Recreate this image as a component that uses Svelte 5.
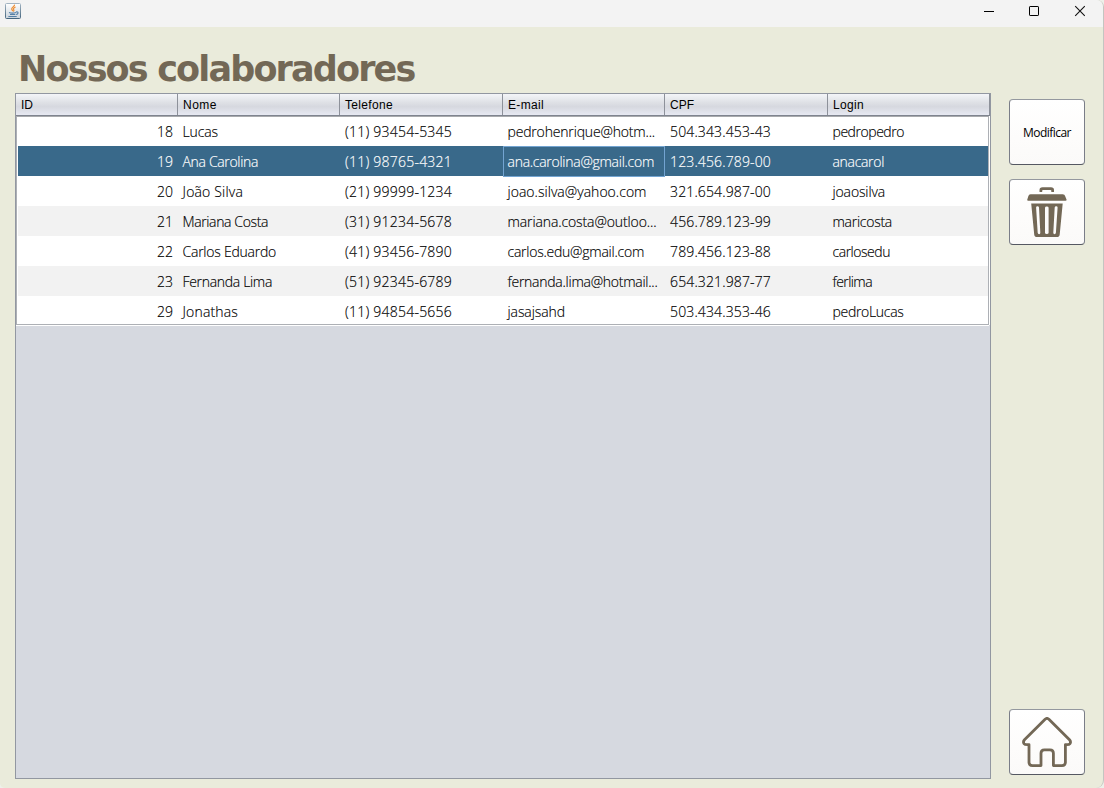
<script>
  const columns = [
    { name: 'ID', w: 12 },
    { name: 'Nome', w: 34 },
    { name: 'Telefone', w: 48 },
    { name: 'E-mail', w: 36 },
    { name: 'CPF', w: 24 },
    { name: 'Login', w: 31 }
  ];
  const rows = [
    ['18', 'Lucas', '(11) 93454-5345', 'pedrohenrique@hotm...', '504.343.453-43', 'pedropedro'],
    ['19', 'Ana Carolina', '(11) 98765-4321', 'ana.carolina@gmail.com', '123.456.789-00', 'anacarol'],
    ['20', 'João Silva', '(21) 99999-1234', 'joao.silva@yahoo.com', '321.654.987-00', 'joaosilva'],
    ['21', 'Mariana Costa', '(31) 91234-5678', 'mariana.costa@outloo...', '456.789.123-99', 'maricosta'],
    ['22', 'Carlos Eduardo', '(41) 93456-7890', 'carlos.edu@gmail.com', '789.456.123-88', 'carlosedu'],
    ['23', 'Fernanda Lima', '(51) 92345-6789', 'fernanda.lima@hotmail...', '654.321.987-77', 'ferlima'],
    ['29', 'Jonathas', '(11) 94854-5656', 'jasajsahd', '503.434.353-46', 'pedroLucas']
  ];
  const widths = [
    [16, 35.5, 107, 147.5, 101, 71.5],
    [16, 75.5, 107, 146.5, 101, 51.5],
    [16, 60.5, 107, 139, 101, 52.5],
    [16, 85.5, 107, 149, 101, 59.5],
    [16, 93.5, 107, 136.5, 101, 57.5],
    [16, 89.5, 107, 150, 101, 39.5],
    [16, 55.5, 107, 57.5, 101, 71]
  ];
  let selectedRow = $state(1);
  let selectedCol = $state(3);

  // Tracks the letters so that the label takes the given width.
  function fit(node, width) {
    const natural = node.getBoundingClientRect().width;
    node.style.letterSpacing = (width - natural) / node.textContent.length + 'px';
  }
</script>

<div class="window">
  <header class="titlebar">
    <svg class="java" width="16" height="16" viewBox="0 0 16 16">
      <defs>
        <linearGradient id="jb" x1="0" y1="0" x2="0" y2="1">
          <stop offset="0" stop-color="#fff" />
          <stop offset="1" stop-color="#c9d3dc" />
        </linearGradient>
        <linearGradient id="js" x1="0" y1="0" x2="0" y2="1">
          <stop offset="0" stop-color="#a3b4c2" />
          <stop offset="1" stop-color="#45667f" />
        </linearGradient>
      </defs>
      <rect x=".5" y=".5" width="15" height="15" rx="1" fill="url(#jb)" stroke="url(#js)" />
      <path d="M9.5 1.6C10 3.5 6.2 4.2 6.7 6.1c.2.9 1 1.3 1 2.2M10.6 4c-1.9.8-2.7 1.7-1.9 2.7.5.7.2 1.3-.5 1.8" fill="none" stroke="#ee8d32" stroke-width="1.2" />
      <path d="M4 9.4c1.8.8 5 .8 7 0M5 11.5h5.3M3.4 13.5h8.3M11 9c2.9-.6 2.5 2.1.1 2.5" fill="none" stroke="#557fa5" stroke-width="1.1" />
    </svg>
    <svg class="controls" width="103" height="12" viewBox="0 0 103 12">
      <path d="M0 6.5h10" stroke="#000" />
      <rect x="45.5" y="1.5" width="9" height="9" rx=".6" fill="none" stroke="#000" />
      <path d="M91.2 1.2l9.6 9.6M100.8 1.2l-9.6 9.6" stroke="#111" stroke-width="1.1" />
    </svg>
  </header>

  <div class="content">
    <main>
      <h1><span use:fit={396.5}>Nossos colaboradores</span></h1>
      <section class="scroll">
        <div class="grid head">
          {#each columns as col}
            <div class="th"><span use:fit={col.w}>{col.name}</span></div>
          {/each}
        </div>
        <div class="body">
          {#each rows as row, r}
            <div class="grid row" class:selected={r === selectedRow}>
              {#each row as value, c}
                <div class="td" class:focus={r === selectedRow && c === selectedCol}>
                  <span use:fit={widths[r][c]}>{value}</span>
                </div>
              {/each}
            </div>
          {/each}
        </div>
      </section>
    </main>

    <aside>
      <button><span use:fit={48}>Modificar</span></button>
      <button aria-label="Excluir">
        <svg width="40" height="50" viewBox="0 0 40 50" fill="#736856">
          <path d="M12.5 5V3Q12.5 .2 15.5 .2h8.5Q27 .2 27 3v2h-2.7V3.6q0-.7-.8-.7H16q-.8 0-.8.7V5z" />
          <path d="M3.5 7.2h32.2q2 0 2.5 2l1.3 3.3q.4 1.2-1 1.2H1.2q-1.3 0-.9-1.2L1.3 9.2q.5-2 2.2-2z" />
          <path fill-rule="evenodd" d="M4.2 16.4h31.5l-3 31q-.3 2.6-3 2.6H10.2q-2.7 0-3-2.6zM9.1 20.5l1.6 25.3q.2 1.4 1.4 1.4 1.3 0 1.2-1.4L12 20.5q-.2-1.2-1.5-1.2t-1.4 1.2zM18 20.7v25q0 1.4 1.8 1.4t1.8-1.4v-25q0-1.3-1.8-1.3T18 20.7zM27.7 20.5l-1.4 25.3q0 1.4 1.2 1.4t1.4-1.4l1.7-25.3q0-1.2-1.4-1.2t-1.5 1.2z" />
        </svg>
      </button>
      <button class="home" aria-label="Início">
        <svg width="50" height="50" viewBox="0 0 50 50" fill="none" stroke="#736856" stroke-width="2.8" stroke-linejoin="round">
          <path d="M23.1 2.2Q25 .6 26.9 2.2L47.5 22.8Q49.2 24.7 48 26.6Q47 28 43.4 27.6V45.2Q43.4 48.6 40 48.6H31.4V36.3Q31.4 32.8 28 32.8H22.4Q19 32.8 19 36.3V48.6H10.4Q7 48.6 7 45.2V27.6Q3 28 2 26.6Q.8 24.7 2.5 22.8Z" />
        </svg>
      </button>
    </aside>
  </div>
</div>

<style>
  :global(body) {
    margin: 0;
    background: #eef0ea;
    overflow: hidden;
  }
  .window {
    box-sizing: border-box;
    width: 1104px;
    height: 788px;
    display: flex;
    flex-direction: column;
    background: #eaebdb;
    border-right: 1px solid #c4c5c1;
    border-radius: 0 7px 8px 5px;
    overflow: hidden;
    font-family: 'Open Sans', 'Noto Sans', sans-serif;
  }
  .titlebar {
    box-sizing: border-box;
    height: 27px;
    flex: none;
    display: flex;
    justify-content: space-between;
    align-items: flex-start;
    padding: 3px 16px 0 5px;
    background: #f3f3f3;
  }
  .controls {
    margin-top: 2px;
  }
  .content {
    flex: 1;
    display: flex;
    gap: 18px;
    padding: 0 18px 9px 15px;
  }
  main {
    width: 976px;
    display: flex;
    flex-direction: column;
  }
  h1 {
    margin: 0;
    height: 66px;
    box-sizing: border-box;
    padding: 20px 0 0 3px;
    color: #736856;
    font: bold 35px/44px 'DejaVu Sans', sans-serif;
    white-space: nowrap;
  }
  .scroll {
    flex: 1;
    box-sizing: border-box;
    border: 1px solid #9297a1;
    background: #d6d9e0;
  }
  .grid {
    display: grid;
    grid-template-columns: 162px 162px 163px 162px 163px 1fr;
  }
  .head {
    box-sizing: border-box;
    height: 22px;
    border-bottom: 1px solid #7f848f;
    background: linear-gradient(#f4f5f8 0%, #dfe1e6 40%, #d6d8df 60%, #e7e9f2 100%);
  }
  .th {
    box-sizing: border-box;
    height: 21px;
    padding-left: 5px;
    border-right: 1px solid #8d919a;
    font: 12px/23px 'Liberation Sans', Arial, sans-serif;
    color: #000;
    white-space: nowrap;
  }
  .body {
    box-sizing: border-box;
    height: 209px;
    margin-right: 1px;
    border: 1px solid #adb0b5;
    border-top-color: #a8aaad;
    background: #fff;
    box-shadow: 0 1px #fff, 1px 0 #fff;
  }
  .row {
    height: 30px;
    margin: 0 0 0 1px;
    grid-template-columns: 160px 162px 163px 162px 163px 1fr;
    background: #fff;
    color: #000;
  }
  .row:first-child {
    height: 29px;
  }
  .row:first-child .td {
    line-height: 30px;
  }
  .row:last-child {
    height: 28px;
  }
  .row:nth-child(even) {
    background: #f2f2f2;
  }
  .row.selected {
    background: #39698a;
    color: #fff;
  }
  .td {
    box-sizing: border-box;
    padding-left: 4.5px;
    font-weight: 300;
    font-size: 14px;
    line-height: 31px;
    white-space: nowrap;
    -webkit-text-stroke: 0.15px currentColor;
  }
  .td:nth-child(3),
  .td:nth-child(5) {
    padding-left: 5px;
  }
  .td:first-child {
    text-align: right;
    padding: 0 5px 0 0;
  }
  .td.focus {
    border: 1px solid #73a4d1;
    padding-left: 3.5px;
    line-height: 29px;
  }
  aside {
    width: 76px;
    display: flex;
    flex-direction: column;
    gap: 14px;
    padding-top: 72px;
  }
  button {
    box-sizing: border-box;
    width: 76px;
    height: 66px;
    padding: 2px 0 0;
    display: flex;
    align-items: center;
    justify-content: center;
    border: 1px solid #7a7d88;
    border-top-color: #94989f;
    border-bottom-color: #555862;
    border-radius: 4px;
    background: linear-gradient(#fff 0%, #fdfcfb 60%, #fbfaf9 100%);
    color: #000;
    font: 12px/16px 'Open Sans', 'Noto Sans', sans-serif;
  }
  button[aria-label] {
    padding: 0;
  }
  .home {
    margin-top: auto;
    margin-bottom: 4px;
  }
</style>
